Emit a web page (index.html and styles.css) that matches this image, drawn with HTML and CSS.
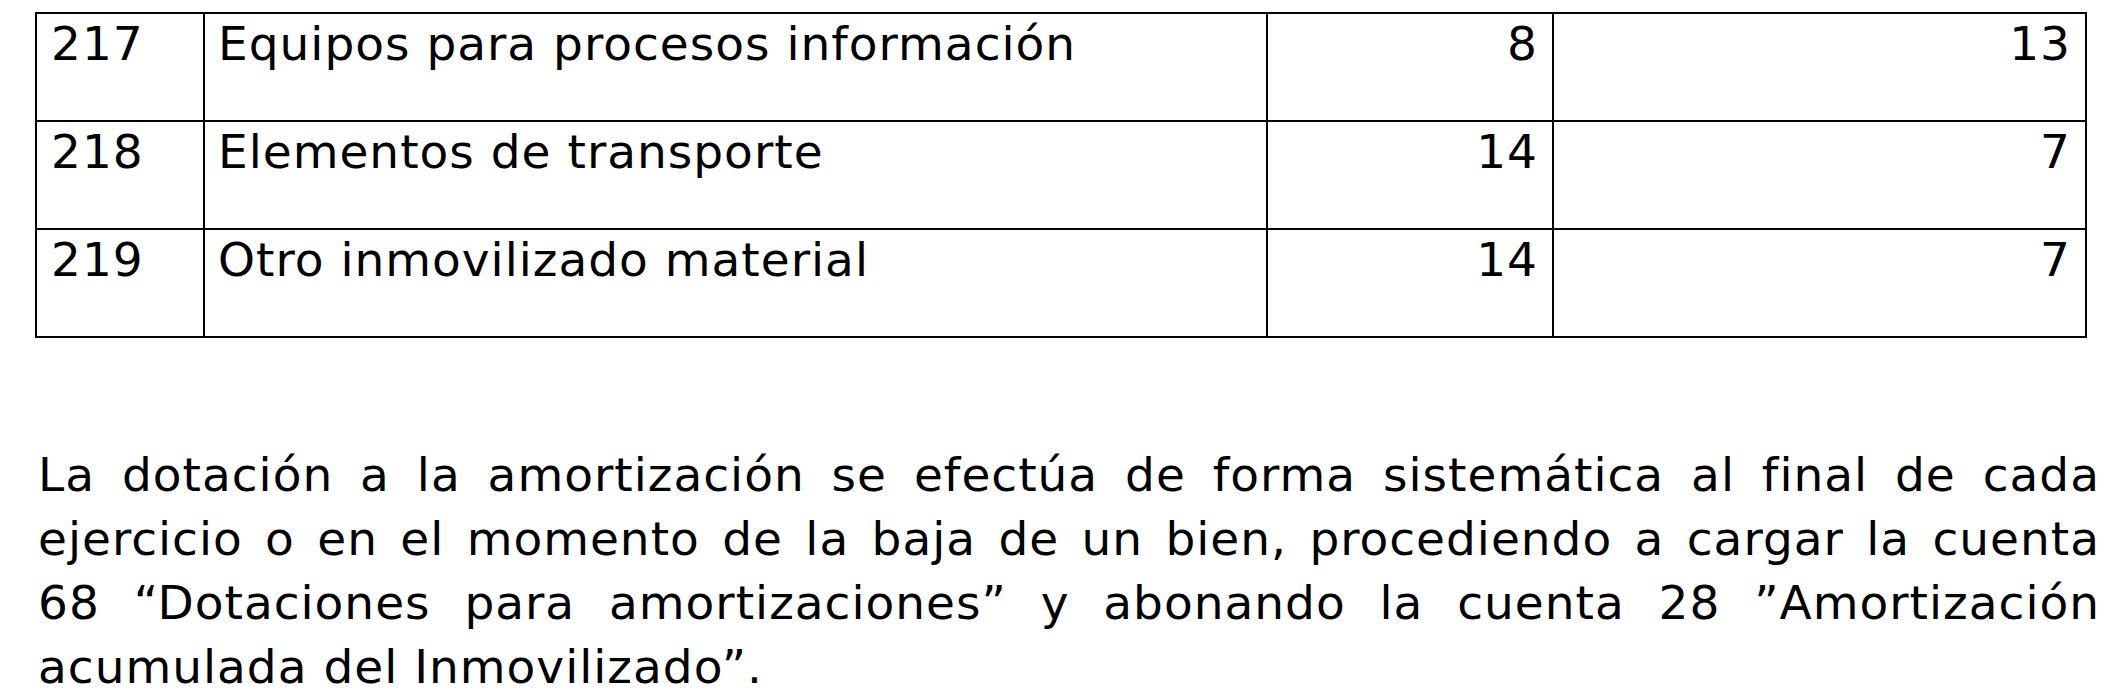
FILE: index.html
```html
<!DOCTYPE html>
<html lang="es">
<head>
<meta charset="utf-8">
<title>Amortización</title>
<link rel="stylesheet" href="styles.css">
</head>
<body>
<div class="doc">
  <div class="grid" role="table">
    <div class="cell code">217</div>
    <div class="cell name">Equipos para procesos información</div>
    <div class="cell num">8</div>
    <div class="cell num">13</div>

    <div class="cell code">218</div>
    <div class="cell name">Elementos de transporte</div>
    <div class="cell num">14</div>
    <div class="cell num">7</div>

    <div class="cell code">219</div>
    <div class="cell name">Otro inmovilizado material</div>
    <div class="cell num">14</div>
    <div class="cell num">7</div>
  </div>

  <p class="para">
    <span class="line just">La dotación a la amortización se efectúa de forma sistemática al final de cada</span>
    <span class="line just">ejercicio o en el momento de la baja de un bien, procediendo a cargar la cuenta</span>
    <span class="line just">68 “Dotaciones para amortizaciones” y abonando la cuenta 28 ”Amortización</span>
    <span class="line">acumulada del Inmovilizado”.</span>
  </p>
</div>
</body>
</html>
```
FILE: styles.css
```css
html, body {
  margin: 0;
  padding: 0;
  background: #ffffff;
}

body {
  font-family: "DejaVu Sans", "Liberation Sans", sans-serif;
  font-size: 47px;
  letter-spacing: 1px;
  color: #000000;
}

.doc {
  padding: 12px 0 0 35px;
}

.grid {
  display: grid;
  grid-template-columns: 168px 1063px 286px 533px;
  grid-auto-rows: 108px;
  border-left: 2px solid #000;
  border-top: 2px solid #000;
  width: 2050px;
}

.cell {
  box-sizing: border-box;
  border-right: 2px solid #000;
  border-bottom: 2px solid #000;
  line-height: 60px;
  padding: 0 14px;
  white-space: nowrap;
}

.code,
.name {
  text-align: left;
}

.name {
  padding-left: 13px;
}

.num {
  text-align: right;
}

.para {
  margin: 105px 0 0 3px;
  width: 2062px;
  line-height: 64px;
}

.line {
  display: block;
  white-space: nowrap;
}

.line.just {
  white-space: normal;
  text-align: justify;
  text-align-last: justify;
}
```
